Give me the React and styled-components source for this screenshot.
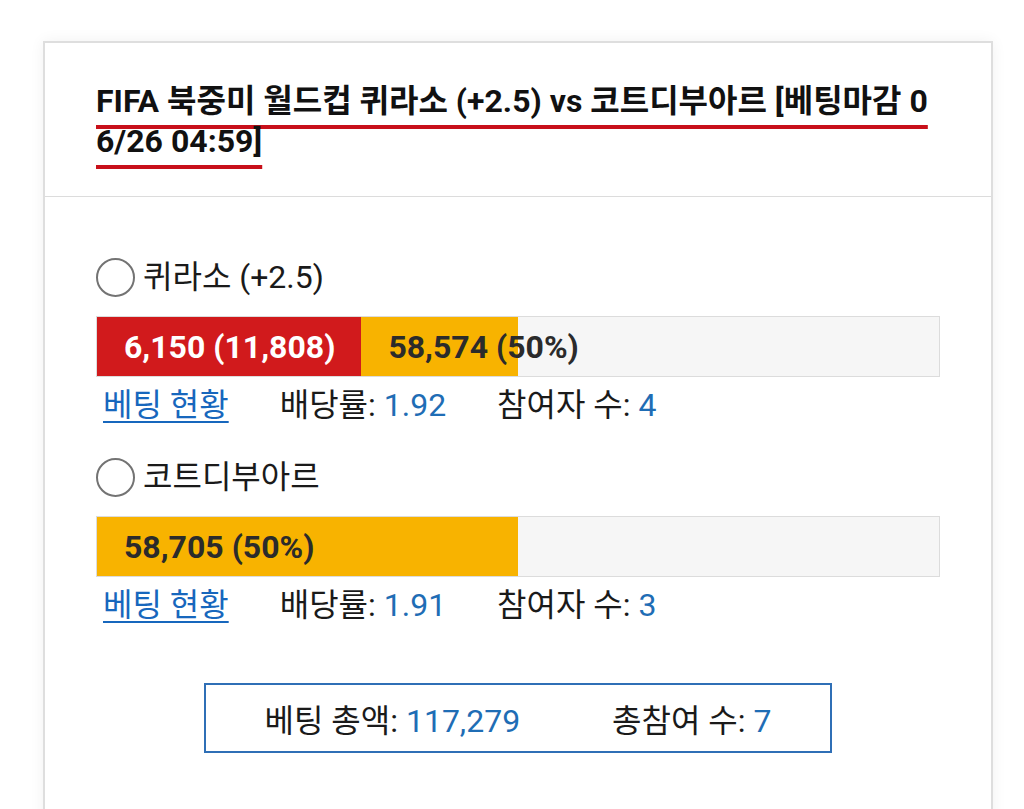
import React from 'react'
import styled, { createGlobalStyle } from 'styled-components'

const GlobalStyle = createGlobalStyle`
  html, body {
    margin: 0;
    padding: 0;
    background: #ffffff;
  }
  body {
    font-family: Roboto, "Noto Sans CJK KR", sans-serif;
    color: #1a1a1a;
  }
`

const Page = styled.div`
  padding: 41px 31px 0 43px;
`

const Card = styled.div`
  width: 950px;
  min-height: 800px;
  box-sizing: border-box;
  border: 2px solid #dedede;
  border-bottom: none;
  background: #fff;
  box-shadow: 0 0 14px rgba(0, 0, 0, 0.06);
`

const CardHeader = styled.div`
  padding: 38px 51px 35px;
  border-bottom: 1px solid #dcdcdc;
`

const Title = styled.h2`
  margin: 0;
  font-size: 32px;
  font-weight: 700;
  line-height: 40px;
  color: #111;
  word-break: break-all;
  span {
    text-decoration: underline;
    text-decoration-color: #c8101a;
    text-decoration-thickness: 4px;
    text-underline-offset: 13px;
    text-decoration-skip-ink: none;
  }
`

const Body = styled.div`
  padding: 60px 51px 40px;
  font-size: 32px;
`

const Option = styled.label`
  display: flex;
  align-items: center;
  gap: 8px;
  height: 40px;
  margin-top: ${(p) => (p.first ? '0' : '32px')};
  cursor: pointer;
`

const RadioCircle = styled.span`
  width: 39px;
  height: 39px;
  box-sizing: border-box;
  border: 2px solid #737373;
  border-radius: 50%;
  background: #fff;
`

const OptionLabel = styled.span`
  line-height: 40px;
  color: #1a1a1a;
`

const Bar = styled.div`
  display: flex;
  margin-top: 19px;
  height: 61px;
  box-sizing: border-box;
  border: 1px solid #dcdcdc;
  background: #f6f6f6;
`

const Segment = styled.div`
  flex: none;
  display: flex;
  align-items: center;
  box-sizing: border-box;
  padding-left: 27px;
  white-space: nowrap;
  overflow: visible;
  font-weight: 700;
  font-size: 32px;
  background: ${(p) => p.bg};
  color: ${(p) => p.fg};
`

const InfoRow = styled.div`
  display: flex;
  align-items: center;
  gap: 51px;
  margin-top: 8px;
  padding-left: 7px;
  line-height: 40px;
`

const StatusLink = styled.a`
  color: #1767bd;
  text-decoration: underline;
  text-underline-offset: 5px;
  text-decoration-thickness: 2px;
`

const Stat = styled.span`
  color: #1a1a1a;
`

const Value = styled.span`
  color: #1f6db5;
`

const Summary = styled.div`
  display: flex;
  justify-content: center;
  align-items: center;
  gap: 92px;
  width: 628px;
  height: 70px;
  box-sizing: border-box;
  margin: 58px auto 0;
  border: 2px solid #2f6fb6;
`

const options = [
  {
    label: '퀴라소 (+2.5)',
    segments: [
      { text: '6,150 (11,808)', width: 31.4, bg: '#d11a1c', fg: '#fff' },
      { text: '58,574 (50%)', width: 18.6, bg: '#f8b300', fg: '#2b2b2b' },
    ],
    odds: '1.92',
    players: 4,
  },
  {
    label: '코트디부아르',
    segments: [
      { text: '58,705 (50%)', width: 50, bg: '#f8b300', fg: '#2b2b2b' },
    ],
    odds: '1.91',
    players: 3,
  },
]

export default function App() {
  return (
    <>
      <GlobalStyle />
      <Page>
        <Card>
          <CardHeader>
            <Title>
              <span>FIFA 북중미 월드컵 퀴라소 (+2.5) vs 코트디부아르 [베팅마감 06/26 04:59]</span>
            </Title>
          </CardHeader>
          <Body>
            {options.map((opt, i) => (
              <div key={opt.label}>
                <Option first={i === 0}>
                  <RadioCircle />
                  <OptionLabel>{opt.label}</OptionLabel>
                </Option>
                <Bar>
                  {opt.segments.map((seg) => (
                    <Segment
                      key={seg.text}
                      bg={seg.bg}
                      fg={seg.fg}
                      style={{ width: `${seg.width}%` }}
                    >
                      {seg.text}
                    </Segment>
                  ))}
                </Bar>
                <InfoRow>
                  <StatusLink href="#">베팅 현황</StatusLink>
                  <Stat>
                    배당률: <Value>{opt.odds}</Value>
                  </Stat>
                  <Stat>
                    참여자 수: <Value>{opt.players}</Value>
                  </Stat>
                </InfoRow>
              </div>
            ))}
            <Summary>
              <Stat>
                베팅 총액: <Value>117,279</Value>
              </Stat>
              <Stat>
                총참여 수: <Value>7</Value>
              </Stat>
            </Summary>
          </Body>
        </Card>
      </Page>
    </>
  )
}
